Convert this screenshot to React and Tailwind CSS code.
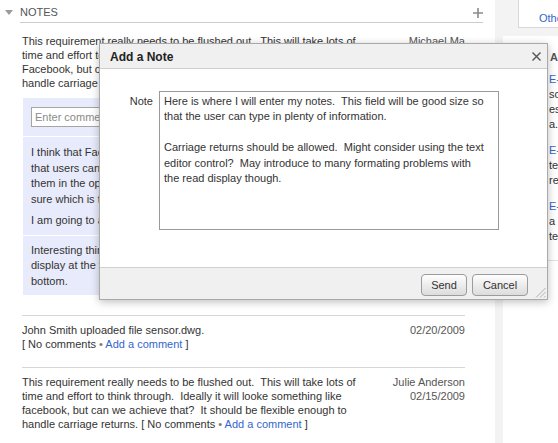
import React from 'react';

const NOTE_TEXT = [
  'This requirement really needs to be flushed out.\u00a0 This will take lots of',
  'time and effort to think through.\u00a0 Ideally it will looke something like',
];

const DIALOG_TEXT =
  'Here is where I will enter my notes.  This field will be good size so\n' +
  'that the user can type in plenty of information.\n' +
  '\n' +
  'Carriage returns should be allowed.  Might consider using the text\n' +
  'editor control?  May introduce to many formating problems with\n' +
  'the read display though.';

const Lines = ({ lines }) => (
  <div>
    {lines.map((line, i) => (
      <div key={i} className="whitespace-nowrap">
        {line}
      </div>
    ))}
  </div>
);

const CommentLinks = () => (
  <>
    [ No comments <span className="text-[#777]">•</span>{' '}
    <a className="text-[#3366cc]">Add a comment</a> ]
  </>
);

const Plus = () => (
  <svg width="10" height="10" viewBox="0 0 10 10" className="mb-[1px]">
    <path d="M5 0v10M0 5h10" stroke="#8a8a8a" strokeWidth="1.6" />
  </svg>
);

const CommentsBox = () => (
  <div className="mt-[8px] ml-[1px] bg-[#e8ebfb]">
    <div className="px-[8px] pt-[9px] pb-[9px]">
      <input
        className="h-[20px] w-[240px] border border-[#a5a5a5] bg-white px-[3px] text-[11px] text-[#333] placeholder:text-[#8a8a8a] outline-none"
        placeholder="Enter comment..."
      />
    </div>
    <div className="border-t border-white px-[8px] pt-[8px] pb-[6px] leading-[15.5px]">
      <Lines
        lines={[
          'I think that Facebook does a good job with this.  I like',
          'that users can add comments to a post and then see',
          'them in the option they prefer.  I am not',
          'sure which is the best way to go.',
        ]}
      />
      <div className="mt-[6px]">I am going to ask the team about it.</div>
    </div>
    <div className="border-t border-white px-[8px] pt-[7px] pb-[6px] leading-[15.5px]">
      <Lines
        lines={[
          'Interesting thing is that the newest comment is on',
          'display at the top and the oldest is at the',
          'bottom.',
        ]}
      />
    </div>
  </div>
);

const NotesPanel = () => (
  <div className="w-[495px] shrink-0 bg-white">
    <div className="flex">
      <div className="w-[20px] pl-[5px] pt-[10px]">
        <svg width="8" height="5" viewBox="0 0 8 5">
          <path d="M0 0h8L4 5z" fill="#9a9a9a" />
        </svg>
      </div>
      <div className="mr-[12px] flex flex-1 items-end justify-between border-b border-[#cccccc] pt-[5px] pb-[3px]">
        <span className="text-[#555]">NOTES</span>
        <Plus />
      </div>
    </div>

    <div className="ml-[22px] w-[443px]">
      <div className="border-b border-[#d6d6d6] pt-[11px] pb-[20px]">
        <div className="flex">
          <div className="w-[360px] shrink-0">
            <Lines
              lines={[
                ...NOTE_TEXT,
                'Facebook, but can we achieve that?\u00a0 It should be flexible enough to',
                'handle carriage returns.',
              ]}
            />
          </div>
          <div className="flex-1 whitespace-nowrap text-right text-[#555]">
            <div>Michael Ma</div>
            <div>02/22/2009</div>
          </div>
        </div>
        <CommentsBox />
      </div>

      <div className="flex border-b border-[#d6d6d6] pt-[7px] pb-[16px]">
        <div className="w-[360px] shrink-0">
          <div>John Smith uploaded file sensor.dwg.</div>
          <div>
            <CommentLinks />
          </div>
        </div>
        <div className="flex-1 whitespace-nowrap text-right text-[#555]">02/20/2009</div>
      </div>

      <div className="flex pt-[7px]">
        <div className="w-[360px] shrink-0">
          <Lines
            lines={[
              ...NOTE_TEXT,
              'facebook, but can we achieve that?\u00a0 It should be flexible enough to',
            ]}
          />
          <div className="whitespace-nowrap">
            handle carriage returns. <CommentLinks />
          </div>
        </div>
        <div className="flex-1 whitespace-nowrap text-right text-[#555]">
          <div>Julie Anderson</div>
          <div>02/15/2009</div>
        </div>
      </div>
    </div>
  </div>
);

const SideItem = ({ id, lines }) => (
  <div className="mt-[11px] first:mt-0">
    <a className="text-[#3366cc]">{id}</a>
    {lines.map((l) => (
      <div key={l} className="whitespace-nowrap">
        {l}
      </div>
    ))}
  </div>
);

const SidePanel = () => (
  <div className="ml-[8px] flex flex-1 flex-col bg-white">
    <div className="bg-[#f3f3f3] pl-[15px] pb-[8px]">
      <div className="h-[28px] border-b border-l border-[#d8d8d8] bg-white pl-[20px] pt-[11px] whitespace-nowrap">
        <a className="text-[#3366cc]">Other Projects</a>
      </div>
    </div>
    <div className="border-b border-[#e0e0e0] pt-[14px] pb-[16px]">
      <div className="pl-[47px] font-bold text-[#555] whitespace-nowrap">Alerts</div>
      <div className="mt-[8px] pl-[46px] leading-[15px]">
        <SideItem id="E-1021" lines={['scope review', 'estimates', 'a...']} />
        <SideItem id="E-1034" lines={['test plan', 'results']} />
        <SideItem id="E-1040" lines={['a sensor', 'test']} />
      </div>
    </div>
    <div className="mt-auto flex justify-end pr-[2px]">
      <svg width="8" height="6" viewBox="0 0 8 6">
        <path d="M7 0v5.5H0" stroke="#222" fill="none" />
      </svg>
    </div>
  </div>
);

const AddNoteDialog = () => (
  <div className="absolute left-[99px] top-[43px] flex h-[257px] w-[449px] flex-col border border-[#a9a9a9] bg-white shadow-[0_2px_8px_rgba(0,0,0,0.25)]">
    <div className="flex h-[25px] items-center justify-between border-b border-[#cfcfcf] bg-[#f0f0f0] pl-[10px] pr-[6px] pt-[1px]">
      <span className="text-[12px] font-bold text-[#222]">Add a Note</span>
      <svg width="9" height="9" viewBox="0 0 9 9">
        <path d="M0.5 0.5l8 8M8.5 0.5l-8 8" stroke="#555" strokeWidth="1.4" />
      </svg>
    </div>
    <div className="flex flex-1 pt-[22px]">
      <div className="w-[53px] pt-[3px] text-right text-[#333]">Note</div>
      <textarea
        readOnly
        defaultValue={DIALOG_TEXT}
        className="ml-[6px] h-[139px] w-[340px] resize-none overflow-hidden border border-[#9a9a9a] px-[4px] pt-[2px] text-[11px] leading-[15.4px] text-[#333] outline-none"
      />
    </div>
    <div className="relative flex h-[32px] items-start justify-end gap-[5px] border-t border-[#d0d0d0] bg-[#f0f0f0] pt-[6px] pr-[19px]">
      <button className="h-[22px] w-[46px] rounded-[4px] border border-[#9c9c9c] bg-linear-to-b from-[#fefefe] to-[#dcdcdc] text-[11px] text-[#333]">
        Send
      </button>
      <button className="h-[22px] w-[56px] rounded-[4px] border border-[#9c9c9c] bg-linear-to-b from-[#fefefe] to-[#dcdcdc] text-[11px] text-[#333]">
        Cancel
      </button>
      <svg
        width="11"
        height="11"
        viewBox="0 0 11 11"
        className="absolute right-[1px] bottom-[1px]"
      >
        <path d="M10.5 1L1 10.5M10.5 5L5 10.5M10.5 9L9 10.5" stroke="#b0b0b0" />
      </svg>
    </div>
  </div>
);

export default function App() {
  return (
    <div className="relative flex h-[443px] w-[558px] overflow-hidden bg-[#f3f3f3] font-[family-name:Liberation_Sans,Arial,sans-serif] text-[11px] leading-[14px] text-[#333]">
      <NotesPanel />
      <SidePanel />
      <AddNoteDialog />
    </div>
  );
}
